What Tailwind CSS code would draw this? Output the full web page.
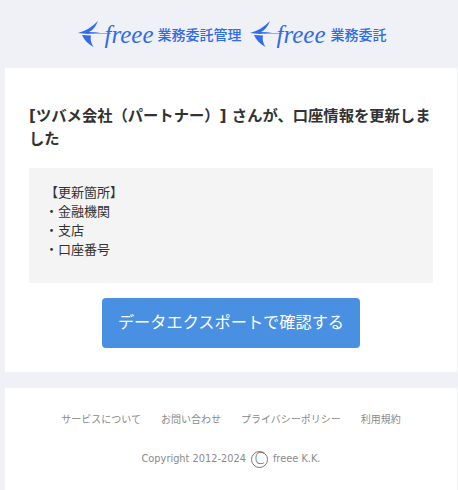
<!DOCTYPE html>
<html lang="ja">
  <head>
    <meta charset="UTF-8" />
    <title>freee</title>
    <script src="https://cdn.jsdelivr.net/npm/@tailwindcss/browser@4"></script>
  </head>
  <body class="bg-[#eff1f6] font-['DejaVu_Sans','Noto_Sans_CJK_JP',sans-serif] [text-spacing-trim:space-all] overflow-hidden">
    <!-- Header logos -->
    <header class="h-[68px] flex items-center justify-center pl-[6px] gap-[8px] text-[#2f6bea]">
      <div class="flex items-center">
        <svg class="w-[27px] h-[28px] overflow-visible" viewBox="0 0 27 28" fill="#2f6bea">
          <path d="M0 13 C8 11 15 6 20 1 C18 6 15 10 11 12 L22 12.5 L10 14 Z"></path>
          <path d="M4 15 L13 15.5 C12 19 13 23 15.5 27 C10 24 6 20 4 15 Z"></path>
          <path d="M14 13.5 H33" stroke="#2f6bea" stroke-opacity="0.5" stroke-width="1"></path>
        </svg>
        <span class="w-[48px] font-['Liberation_Serif',serif] italic text-[25px] leading-none">freee</span>
        <span class="ml-[5px] font-['Noto_Sans_CJK_JP',sans-serif] text-[14px] font-medium">業務委託管理</span>
      </div>
      <div class="flex items-center">
        <svg class="w-[27px] h-[28px] overflow-visible" viewBox="0 0 27 28" fill="#2f6bea">
          <path d="M0 13 C8 11 15 6 20 1 C18 6 15 10 11 12 L22 12.5 L10 14 Z"></path>
          <path d="M4 15 L13 15.5 C12 19 13 23 15.5 27 C10 24 6 20 4 15 Z"></path>
          <path d="M14 13.5 H33" stroke="#2f6bea" stroke-opacity="0.5" stroke-width="1"></path>
        </svg>
        <span class="w-[48px] font-['Liberation_Serif',serif] italic text-[25px] leading-none">freee</span>
        <span class="ml-[6px] font-['Noto_Sans_CJK_JP',sans-serif] text-[14px] font-medium">業務委託</span>
      </div>
    </header>

    <!-- Main card -->
    <main class="ml-[5px] mr-[1px] bg-white h-[304px] px-[24px] pt-[37px]">
      <h1 class="text-[15.3px] font-bold leading-[23px] text-[#323232] h-[63px]">[ツバメ会社（パートナー）] さんが、口座情報を更新しました</h1>
      <div class="bg-[#f4f4f4] h-[115px] pl-[16px] pt-[15px] text-[13px] leading-[19px] text-[#323232]">
        <p>【更新箇所】</p>
        <p>・金融機関</p>
        <p>・支店</p>
        <p>・口座番号</p>
      </div>
      <div class="flex justify-center mt-[15px]">
        <a class="w-[258px] h-[50px] flex items-center justify-center rounded-[4px] bg-[#4a90e2] text-white text-[16.2px]">データエクスポートで確認する</a>
      </div>
    </main>

    <!-- Footer -->
    <footer class="mt-[16px] ml-[5px] mr-[1px] bg-white h-[102px] text-[#8a8a8a]">
      <nav class="flex justify-center gap-[20px] pt-[24px] text-[10px] leading-[15px]">
        <span>サービスについて</span>
        <span>お問い合わせ</span>
        <span>プライバシーポリシー</span>
        <span>利用規約</span>
      </nav>
      <p class="flex justify-center items-center gap-[5px] mt-[22px] text-[9.8px] h-[20px]">
        <span>Copyright 2012-2024</span>
        <span class="w-[17px] h-[17px] rounded-full border border-[#777] flex items-center justify-center text-[15px] font-light text-[#666]">C</span>
        <span>freee K.K.</span>
      </p>
    </footer>
  </body>
</html>
